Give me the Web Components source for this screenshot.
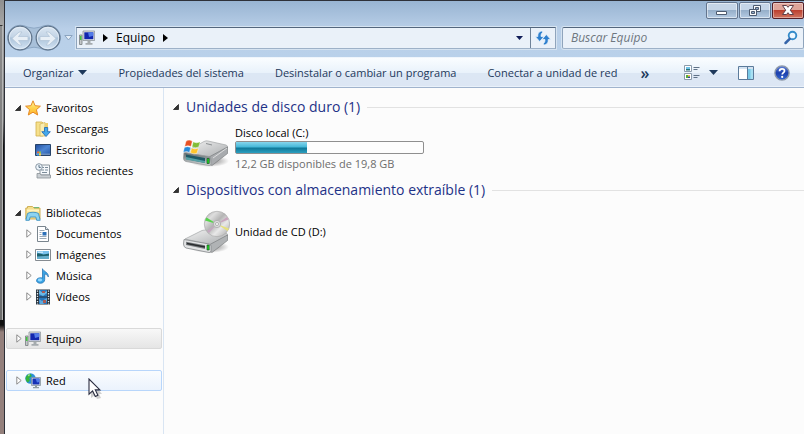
<!DOCTYPE html>
<html lang="es">
<head>
<meta charset="utf-8">
<title>Equipo</title>
<style>
  html, body { height: 100%; margin: 0; }
  body { font: 11px/16px "Open Sans", "Noto Sans", sans-serif; color: #000; overflow: hidden; }
</style>
</head>
<body>
<explorer-window>
  <window-caption slot="caption"></window-caption>
  <address-row slot="address"></address-row>
  <command-bar slot="commands">
    <command-button menu>Organizar</command-button>
    <command-button>Propiedades del sistema</command-button>
    <command-button>Desinstalar o cambiar un programa</command-button>
    <command-button>Conectar a unidad de red</command-button>
  </command-bar>
  <tree-group slot="tree">
    <tree-item icon="star" arrow="open">Favoritos</tree-item>
    <tree-item icon="downloads" level="1">Descargas</tree-item>
    <tree-item icon="desktop" level="1">Escritorio</tree-item>
    <tree-item icon="recent" level="1">Sitios recientes</tree-item>
  </tree-group>
  <tree-group slot="tree">
    <tree-item icon="library" arrow="open">Bibliotecas</tree-item>
    <tree-item icon="document" level="1" arrow="closed">Documentos</tree-item>
    <tree-item icon="picture" level="1" arrow="closed">Imágenes</tree-item>
    <tree-item icon="music" level="1" arrow="closed">Música</tree-item>
    <tree-item icon="video" level="1" arrow="closed">Vídeos</tree-item>
  </tree-group>
  <tree-group slot="tree"><tree-item icon="computer" arrow="closed" state="selected">Equipo</tree-item></tree-group>
  <tree-group slot="tree"><tree-item icon="network" arrow="closed" state="hover">Red</tree-item></tree-group>
  <drive-section heading="Unidades de disco duro (1)">
    <drive-item icon="hdd" name="Disco local (C:)" used="38" info="12,2 GB disponibles de 19,8 GB"></drive-item>
  </drive-section>
  <drive-section heading="Dispositivos con almacenamiento extraíble (1)">
    <drive-item icon="cd" name="Unidad de CD (D:)"></drive-item>
  </drive-section>
</explorer-window>

<script>
const ICONS = {
  star: ['0 0 16 16', `<defs><linearGradient id="g" x2="0" y2="1"><stop stop-color="#fff3a0"/><stop offset=".5" stop-color="#ffd34e"/><stop offset="1" stop-color="#ffb02a"/></linearGradient></defs><path d="M8 .8 10.1 5.7 15.4 6.2 11.4 9.7 12.7 15 8 12.2 3.3 15 4.6 9.7.6 6.2 5.9 5.7Z" fill="url(#g)" stroke="#e58a26" stroke-linejoin="round"/>`],
  downloads: ['0 0 16 16', `<path d="M1 1h6l1 1v13H1Z" fill="#f6e08b" stroke="#d2b04c" stroke-width=".8"/><path d="M5 3l5-1.5V15H5Z" fill="#f9edb2" stroke="#d6b95f" stroke-width=".8"/><path d="M10 2h3v9h-3z" fill="#edcf70"/><path d="M9.5 6.5h3.2v4.2h2.6L11 15.6 6.8 10.7h2.7Z" fill="#43a8ec" stroke="#1a66b4" stroke-width=".8"/>`],
  desktop: ['0 0 16 16', `<defs><linearGradient id="g" x2="1" y2="1"><stop stop-color="#204b9c"/><stop offset=".5" stop-color="#4d86d3"/><stop offset="1" stop-color="#2555a6"/></linearGradient></defs><path d="M.5 2.5h15v11H.5z" fill="url(#g)" stroke="#274369"/><path d="M1 11.5h14V13H1z" fill="#6d90c0"/><path d="M2 9.500h2v2H2z" fill="#ee6a37"/><path d="M4 9.500h2v2H4z" fill="#91c84a"/><path d="M2 11.500h2v2H2z" fill="#49a6e8"/><path d="M4 11.500h2v2H4z" fill="#ffd34e"/>`],
  recent: ['0 0 16 16', `<path d="M5 2h9.5v10H5Z" fill="#f5f8fb" stroke="#8d979f"/><path d="M7 4.5h2m1 0h3M6 7h3m1 0h3M7 9.5h5" stroke="#7b8c9a"/><path d="M2 10.5h3l1 1.5h9.5v3H2Z" fill="#c9ced2" stroke="#8c9297" stroke-width=".8"/><circle cx="4" cy="4" r="3.3" fill="#edf5fb" stroke="#8a98a4"/><path d="M4 2v2.4h1.8" fill="none" stroke="#4d6478" stroke-width=".9"/>`],
  library: ['0 0 16 16', `<path d="M.8 3h1.700V1.500h5L9 3h6v11H.8Z" fill="#f7e08d" stroke="#cba94b" stroke-width=".9"/><path d="M9 2h5v1.2H9z" fill="#74b77a"/><path d="M2 4.5h12v2H2z" fill="#fff3bd"/><path d="M2.500 8.500c2-1.700 9-1.700 11 0l1.700 6.800h-3.500l-.9-3.300H5.200l-.9 3.300H.8Z" fill="#8bd3f1" stroke="#3c91c2" stroke-width=".9"/>`],
  document: ['0 0 16 16', `<path d="M2.5.5h8l3 3v12h-11Z" fill="#fff" stroke="#7a858e"/><path d="M10.5.5v3h3" fill="#dfe6eb" stroke="#7a858e"/><path d="M4.500 4.500h5M4.500 6.500h2M4.500 8.500h2M4.500 10.500h7M4.500 12.500h7" stroke="#9aa9b7"/><path d="M7.500 6h4v3.500h-4z" fill="#2c70b8"/>`],
  picture: ['0 0 16 16', `<path d="M.5 2.500h15v11H.5z" fill="#fff" stroke="#858b91"/><path d="M2 4h12v8H2z" fill="#79c2ed"/><path d="M2 6.500c3-1 5 1.500 8 .8l4-.8V10H2Z" fill="#1c6270"/><path d="M2 9.500 14 8.700V12H2Z" fill="#66aecb"/><path d="M3 5.200h5" stroke="#e5f5ff"/>`],
  music: ['0 0 16 16', `<path d="M7.500.7C8.500 3.700 14 4.300 13.300 9c-.8-2-2.200-2.800-3.600-2.900v5.500c0 2.200-1.900 3.700-4.300 3.700-2.100 0-3.900-1.100-3.900-2.800 0-2 2.900-3.400 6-2.400V.7Z" fill="#3aa3e4" stroke="#1c6cae" stroke-width=".7"/><ellipse cx="5" cy="12" rx="2.200" ry="1.400" fill="#92d8ff"/>`],
  video: ['0 0 16 16', `<path d="M1 .5h14v15H1z" fill="#25313c"/><path d="M4 1h8v6.500H4zM4 8.500h8V15H4z" fill="#2877bd"/><path d="M4 1l4 3 4-2v2L8 7 4 5Z" fill="#6bb8e4"/><path d="M4 10l3 2 5-3v3l-4 3H5Z" fill="#5ba9de"/><path d="M7 2h3v2H7zM8 11h3v3H8z" fill="#a95b55"/><path d="M2.500 1.500v14M13.500 1.500v14" stroke="#e7edf0" stroke-width="1.300" stroke-dasharray="1.300 1.300"/>`],
  computer: ['0 0 16 16', `<path d="M.5 5h2.500v9.500H.5Z" fill="#c3c7c9" stroke="#777d80" stroke-width=".8"/><path d="M1 6h1.500v4H1z" fill="#43c73f"/><path d="M4 1h11.600v9.500H4z" fill="#dfe2e3" stroke="#8e969b" stroke-width=".8"/><path d="M5.300 2.300h9v6.900h-9z" fill="#1327ae"/><path d="M9 2.300h5.300v3.500L10 7Z" fill="#527be8"/><path d="M8.500 11h3v2h2v1.700h-7V13h2Z" fill="#a5abae"/>`],
  network: ['0 0 16 16', `<circle cx="5.500" cy="5.500" r="5.200" fill="#2b8fda"/><path d="M3 1.500c3-1.500 4 .5 3.500 2L4 5l1 2-2 2.500C1 8.500.3 6 .8 4Z" fill="#35b43b"/><path d="M2.500 1.800 5 1.200 4 3.500Z" fill="#c0f09b"/><path d="M6.500 4.500h9v8h-9z" fill="#e0e4e7" stroke="#788894" stroke-width=".7"/><path d="M7.500 5.500h7v6h-7z" fill="#1632b7"/><path d="M10.500 5.500h4V9L12 9.500Z" fill="#527be8"/><path d="M10 12.500h2v1.500h2v1.300H8V14h2Z" fill="#8f9ba3"/>`],
  refresh: ['0 0 16 16', `<path d="M7 1C3.500 1.500 2.600 4 2.900 6.500H.3L4.700 11.500 9 6.500H6C5.900 4.500 6.500 3.200 8 2ZM9 15c3.500-.5 4.400-3 4.100-5.500h2.600L11.300 4.500 7 9.500h3c.1 2-.5 3.300-2 4.500Z" fill="#2f80ce" stroke="#edf5fc" stroke-width=".7"/>`],
  search: ['0 0 16 16', `<circle cx="9.500" cy="5.500" r="3.800" fill="#eff8ff" stroke="#348bca" stroke-width="1.900"/><path d="M6.700 8.800 2.500 13" stroke="#3564a9" stroke-width="2.500" stroke-linecap="round"/>`],
  views: ['0 0 16 16', `<path d="M.5.5h7v6h-7zM.5 8.500h7v6h-7z" fill="#fff" stroke="#8b9bab"/><path d="M2 2h4v2H2z" fill="#70c4e9"/><path d="M2 4h4v1.500H2z" fill="#28737a"/><path d="M2 10h2v3H2z" fill="#57ac38"/><path d="M4 10h2v1.500H4z" fill="#f3c334"/><path d="M4 11.500h2V13H4z" fill="#304496"/><path d="M9.500 2.500h6M9.500 4.500h4M9.500 10.500h6M9.500 12.500h4" stroke="#5f7287"/>`],
  pane: ['0 0 16 14', `<path d="M.5.5h15v13H.5z" fill="#fff" stroke="#5b7b9b"/><path d="M1 1h14v2H1z" fill="#d4e3f1"/><path d="M10 3h5v10h-5z" fill="#79c9e7"/><path d="M12.500 3H15v10h-2.500z" fill="#a7e0f3"/><path d="M9.500 1v12" stroke="#5b7b9b"/>`],
  help: ['0 0 16 16', `<defs><linearGradient id="g" x2="0" y2="1"><stop stop-color="#6184dc"/><stop offset=".5" stop-color="#1c3fac"/><stop offset="1" stop-color="#3569d2"/></linearGradient></defs><circle cx="8" cy="8" r="7.100" fill="url(#g)" stroke="#8d98a8" stroke-width="1.400"/><path d="M5.500 6.200C5.600 4.600 6.600 3.900 8 3.900s2.500.8 2.500 2C10.500 7.600 8.200 7.700 8.200 9.600" fill="none" stroke="#fff" stroke-width="1.700"/><circle cx="8.200" cy="11.900" r="1.100" fill="#fff"/>`],
  hdd: ['0 0 48 36', `<defs><linearGradient id="g" x2="1" y2="1"><stop stop-color="#f4f4f4"/><stop offset="1" stop-color="#a8abad"/></linearGradient><linearGradient id="f" x2="0" y2="1"><stop stop-color="#5a6467"/><stop offset="1" stop-color="#d5dadb"/></linearGradient><radialGradient id="s"><stop stop-color="#777"/><stop offset="1" stop-color="#777" stop-opacity="0"/></radialGradient></defs><ellipse cx="27" cy="30" rx="20" ry="6" fill="url(#s)"/><path d="M3 21 22 10.500Q24 9.500 26 10L44 14q2 .7 1.500 2.500L30 27Z" fill="url(#g)" stroke="#a2a5a6" stroke-width=".7"/><path d="M45.500 16v6.500L30 34.500 27 33v-7Z" fill="#a8abae" stroke="#707375" stroke-width=".6"/><path d="M2 21.500 27 25.500q2 .5 2 2.500v4.500q0 2.500-2 2L4 30.500Q1.500 30 1.500 27Z" fill="url(#f)" stroke="#989b9d" stroke-width=".8"/><path d="M4 23.500 23 27v5L4 28Z" fill="#1f5966"/><path d="M4 26 23 30v2L4 28.500Z" fill="#57a1a5"/><path d="M25 27.500h2.200v5H25z" fill="#22db26" stroke="#113f18" stroke-width=".6"/><path d="M31 27 45 17" stroke="#e8e8e8" stroke-width=".8"/><path d="M24 12.500 30 14" stroke="#8b8f91"/><g stroke="#fff" stroke-width=".4"><path d="M4 10.200q3-2.200 6.300 0L9 15.500q-3-1.700-6.300 0Z" fill="#e75124"/><path d="M11.200 10.800q3 2 7 0L16.700 16q-3 1.700-6.700-.3Z" fill="#82bd37"/><path d="M2.400 16.500q3-1.700 6.300 0L7.400 21.500q-3-2-6.200 0Z" fill="#278bd9"/><path d="M9.700 17q3 1.900 6.700.1L15 22.200q-3 1.500-6.600-.5Z" fill="#ffc52b"/></g>`],
  cd: ['0 0 48 44', `<defs><linearGradient id="d" x2="1" y2="1"><stop stop-color="#a9a9a9"/><stop offset=".25" stop-color="#dedede"/><stop offset=".45" stop-color="#b4b4b4"/><stop offset=".65" stop-color="#e9e9e9"/><stop offset="1" stop-color="#a2a2a2"/></linearGradient><linearGradient id="g" x2="1" y2="1"><stop stop-color="#f4f4f4"/><stop offset="1" stop-color="#a8abad"/></linearGradient><radialGradient id="s"><stop stop-color="#777"/><stop offset="1" stop-color="#777" stop-opacity="0"/></radialGradient></defs><ellipse cx="27" cy="37" rx="20" ry="6" fill="url(#s)"/><path d="M3 29 20 20.500Q22 20 24 20L44 23q2 .7 1.500 2.500L30 35Z" fill="url(#g)" stroke="#a2a5a6" stroke-width=".7"/><path d="M45.500 25v5.500L30 42.500 27 41v-6Z" fill="#b0b3b5" stroke="#707375" stroke-width=".6"/><path d="M2 29.500 27 34q2 .5 2 2v4.500q0 2.500-2 2L4 38Q1.500 37 1.500 34Z" fill="#e2e3e4" stroke="#84888a" stroke-width=".8"/><path d="M4 31.800 23 35.300v3.700L4 35Z" fill="#7a7e81"/><path d="M5 33.500 23 37" stroke="#292c2e" stroke-width="1.300"/><path d="M25 35h2.200v5H25z" fill="#22db26" stroke="#113f18" stroke-width=".6"/><circle cx="35" cy="14" r="12.700" fill="url(#d)" stroke="#aaa" stroke-width=".7"/><path d="M35 14 23 10.500 24.500 7.500Z" fill="#57d34b"/><path d="M35 14 46.500 9.500 45 7Z" fill="#c9a5bd"/><path d="M35 14 47 18.500 45.500 21Z" fill="#e6e07d"/><path d="M35 14 25 21 27 23Z" fill="#c3a8bf"/><circle cx="35" cy="14" r="3.600" fill="#ddd" stroke="#aaa" stroke-width=".8"/><circle cx="35" cy="14" r="1.500" fill="#fff" stroke="#888" stroke-width=".6"/>`],
  cursor: ['0 0 14 22', `<path d="M3 3v17l4-3 2 4 4-1-2-4h3Z" fill="#777" opacity=".35"/><path d="M1 1v15.200l3.600-3.300 2.700 5.600 2.600-1.200-2.600-5.400h4.600Z" fill="#fff" stroke="#2a2d40" stroke-width="1.100"/>`],
  minimize: ['0 0 32 17', `<path d="M10.500 9.500h10v3h-10z" fill="#fff" stroke="#4d5b70"/>`],
  restore: ['0 0 32 17', `<path d="M14.500 3.500h7v6h-7z" fill="#f8f8f8" stroke="#4d5b70"/><path d="M16.500 5.500h3v2h-3z" fill="#90a9c6" stroke="#4d5b70"/><path d="M10.500 7.500h7v6h-7z" fill="#f8f8f8" stroke="#4d5b70"/><path d="M12.500 9.500h3v2h-3z" fill="#90a9c6" stroke="#4d5b70"/>`],
  close: ['0 0 32 17', `<path d="M10.500 3.500h4L16 5.300l1.500-1.800h4L18.300 8.200l3.200 4.300h-4L16 10.700l-1.500 1.800h-4l3.200-4.300Z" fill="#fff" stroke="#5f3f48"/>`],
  down: ['0 0 9 5', `<path d="M0 0h9L4.500 5Z" fill="currentColor"/>`],
  downSmall: ['0 0 7 4', `<path d="M0 0h7L3.500 4Z" fill="currentColor"/>`],
  downOutline: ['0 0 9 6', `<path d="M.8.5h7.400L4.500 5Z" fill="#e4edf6" stroke="#8ba4c0"/>`],
  right: ['0 0 5 8', `<path d="M0 0 5 4 0 8Z" fill="#000"/>`],
  open: ['0 0 6 6', `<path d="M5.500.5v5h-5Z" fill="#333" stroke="#222" stroke-width=".8"/>`],
  closed: ['0 0 7 9', `<path d="M1.800.8 6.200 4.500 1.800 8.200Z" fill="#fff" stroke="#8c8c8c"/>`],
  navigation: ['0 0 56 28', `<defs><linearGradient id="g" x2="0" y2="1"><stop stop-color="#dce7f2"/><stop offset=".45" stop-color="#c3d4e6"/><stop offset=".5" stop-color="#adc4da"/><stop offset="1" stop-color="#d4e4f4"/></linearGradient></defs><path d="M15 1.200q4 0 8 2 6 2 12 0 4-2 8-2a12.500 12.500 0 0 1 0 25q-4 0-8-2-6-2-12 0-4 2-8 2a12.500 12.500 0 0 1 0-25Z" fill="#a8c0d9" stroke="#8ca7c4"/><circle cx="15" cy="14" r="11.800" fill="url(#g)" stroke="#61758c" stroke-width="1.300"/><circle cx="43" cy="14" r="11.800" fill="url(#g)" stroke="#61758c" stroke-width="1.300"/><circle cx="15" cy="14" r="10.700" fill="none" stroke="#e6eff8" stroke-width=".8"/><circle cx="43" cy="14" r="10.700" fill="none" stroke="#e6eff8" stroke-width=".8"/><path d="M7 14.500 14 8h3l-3.500 4.500H23v4h-9.500L17 21h-3Z" fill="#e8eff6" stroke="#b2c5d8" stroke-width=".8"/><path d="M51 14.500 44 8h-3l3.500 4.500H35v4h9.500L41 21h3Z" fill="#e8eff6" stroke="#b2c5d8" stroke-width=".8"/>`]
};

const BUTTON_RESET = `button { font: inherit; color: inherit; background: none; border: 0; padding: 0; margin: 0; display: flex; align-items: center; }`;

function define(name, render) {
  customElements.define(name, class extends HTMLElement {
    constructor() { super(); this.attachShadow({ mode: 'open' }); }
    connectedCallback() { this.shadowRoot.innerHTML = render(this); }
  });
}

define('ui-icon', el => {
  const [box, body] = ICONS[el.getAttribute('name')];
  const [, , w, h] = box.split(' ');
  return `<style>:host { display: block; flex: none; } svg { display: block; }</style>
    <svg width="${w}" height="${h}" viewBox="${box}" fill="none" aria-hidden="true">${body}</svg>`;
});

define('explorer-window', () => `<style>
  :host { display: grid; grid-template-columns: 4px minmax(0, 1fr); height: 100%; }
  .behind { display: flex; flex-direction: column; background: linear-gradient(#8f8f8f, #a5a5a5 24px, #999 60px, #777 120px, #111 146px, #111 325px, #94807c 332px, #94807c); }
  .behind::before { content: ""; height: 25px; }
  .behind::after { content: ""; height: 294px; border-top: 1px solid #333; border-right: 1px solid #b5b5b5; margin-right: 1px; background: linear-gradient(#8c8c8c, #6c6c6c); }
  .window { border: 1px solid #2d3038; border-width: 1px 0 0 1px; display: flex; flex-direction: column; background: #fcfcfc; min-width: 0; }
  .frame { background: linear-gradient(#98b4d2, #b9cfe8 28px, #b9d1ea); padding-bottom: 6px; }
  .body { flex: 1; display: grid; grid-template-columns: 159px minmax(0, 1fr); min-height: 0; }
  nav { border-right: 1px solid #d9e5f3; padding: 9px 1px 0; display: flex; flex-direction: column; gap: 21px; overflow: hidden; }
  main { padding: 9px 0 0 9px; min-width: 0; }
  .cursor { position: absolute; left: 88px; top: 378px; }
</style>
<div class="behind"></div>
<div class="window">
  <div class="frame"><slot name="caption"></slot><slot name="address"></slot></div>
  <slot name="commands"></slot>
  <div class="body"><nav><slot name="tree"></slot></nav><main><slot></slot></main></div>
</div>
<ui-icon class="cursor" name="cursor"></ui-icon>`);

define('window-caption', () => `<style>
  ${BUTTON_RESET}
  :host { display: flex; justify-content: flex-end; gap: 1px; height: 24px; padding-top: 1px; box-sizing: border-box; }
  button { box-sizing: border-box; width: 32px; height: 17px; justify-content: center; border: 1px solid #63758e; border-radius: 2px; box-shadow: inset 0 0 0 1px #ffffff80; background: linear-gradient(#c5d5e7 45%, #96afca 50%, #b5cbe3); }
  .close { border-color: #541f27; background: linear-gradient(#dfa499 45%, #bc4130 50%, #d07561); box-shadow: inset 0 0 0 1px #ffffff60; }
</style>
<button aria-label="Minimizar"><ui-icon name="minimize"></ui-icon></button>
<button aria-label="Restaurar"><ui-icon name="restore"></ui-icon></button>
<button class="close" aria-label="Cerrar"><ui-icon name="close"></ui-icon></button>`);

define('address-row', () => `<style>
  ${BUTTON_RESET}
  :host { display: flex; align-items: center; height: 26px; font-size: 12px; }
  .history { position: relative; margin-right: 3px; }
  .history div { position: absolute; inset: 0; display: grid; grid-template-columns: 1fr 1fr; }
  .path, .search { display: flex; align-items: center; height: 22px; box-sizing: border-box; background: #eaf1f9; border: 1px solid; border-color: #53667d #8fa4bc #9db1c8; box-shadow: 0 0 0 1px #d5e3f1; }
  .path { flex: 478 0 0; margin-left: 3px; }
  .search { flex: 236 0 0; margin-left: 6px; padding-right: 4px; border-radius: 2px; }
  .crumbs { flex: 1; display: flex; align-items: center; padding-left: 2px; gap: 8px; }
  .drop { padding: 0 7px; color: #101c58; }
  .refresh { width: 25px; height: 20px; justify-content: center; border-left: 1px solid #6f8298; }
  input { flex: 1; min-width: 0; border: 0; background: none; outline: 0; font: inherit; font-style: italic; padding: 0 0 0 8px; }
  input::placeholder { color: #6f7780; opacity: 1; }
</style>
<div class="history"><ui-icon name="navigation"></ui-icon><div><button aria-label="Atrás"></button><button aria-label="Adelante"></button></div></div>
<button aria-label="Páginas recientes"><ui-icon name="downOutline"></ui-icon></button>
<div class="path">
  <div class="crumbs"><ui-icon name="computer"></ui-icon><ui-icon name="right"></ui-icon><button>Equipo</button><ui-icon name="right"></ui-icon></div>
  <button class="drop" aria-label="Ubicaciones anteriores"><ui-icon name="downSmall"></ui-icon></button>
  <button class="refresh" aria-label="Actualizar"><ui-icon name="refresh"></ui-icon></button>
</div>
<div class="search"><input type="search" aria-label="Buscar" placeholder="Buscar Equipo"><button aria-label="Buscar ahora"><ui-icon name="search"></ui-icon></button></div>`);

define('command-bar', () => `<style>
  ${BUTTON_RESET}
  :host { display: flex; align-items: center; height: 31px; box-sizing: border-box; flex: none; padding: 0 14px 0 18px; gap: 31px; color: #1e395b; background: linear-gradient(#fafdff, #e9f2fb 50%, #dce7f4 52%, #dce6f4); border-top: 1px solid #eef5fc; border-bottom: 1px solid #a0b3cd; box-shadow: inset 0 -1px #e9f1fa; }
  .more { font-size: 16px; font-weight: 600; margin-left: -8px; }
  .tools { margin-left: auto; display: flex; align-items: center; gap: 20px; }
  .views { gap: 9px; }
</style>
<slot></slot>
<button class="more" aria-label="Más comandos">»</button>
<div class="tools">
  <button class="views" aria-label="Cambiar la vista"><ui-icon name="views"></ui-icon><ui-icon name="down"></ui-icon></button>
  <button aria-label="Panel de vista previa"><ui-icon name="pane"></ui-icon></button>
  <button aria-label="Ayuda"><ui-icon name="help"></ui-icon></button>
</div>`);

define('command-button', el => `<style>
  ${BUTTON_RESET}
  :host { display: block; } button { gap: 5px; white-space: nowrap; }
</style><button><slot></slot>${el.hasAttribute('menu') ? '<ui-icon name="down"></ui-icon>' : ''}</button>`);

define('tree-group', () => `<style>:host { display: block; }</style><slot></slot>`);

define('tree-item', el => `<style>
  ${BUTTON_RESET}
  :host { display: block; }
  button { box-sizing: border-box; width: 100%; height: 21px; border: 1px solid transparent; border-radius: 2px; padding-left: 8px; }
  :host([level]) button { padding-left: 18px; }
  .arrow { width: 10px; flex: none; }
  .label { padding-left: 5px; white-space: nowrap; }
  :host([state=selected]) button { background: linear-gradient(#f8f8f8, #e5e5e5); border-color: #d9d9d9; }
  :host([state=hover]) button { background: linear-gradient(#fafcfe, #ebf3fd); border-color: #b8d6fb; }
</style><button><span class="arrow">${el.hasAttribute('arrow') ? `<ui-icon name="${el.getAttribute('arrow')}"></ui-icon>` : ''}</span><ui-icon name="${el.getAttribute('icon')}"></ui-icon><span class="label"><slot></slot></span></button>`);

define('drive-section', el => `<style>
  :host { display: block; }
  h2 { margin: 0; display: flex; align-items: center; font-size: 14px; line-height: 20px; font-weight: 400; color: #1e3287; white-space: nowrap; gap: 7px; }
  h2::after { content: ""; flex: 1; height: 1px; background: #e2e2e2; }
  .items { height: 63px; display: flex; align-items: center; }
</style><h2><ui-icon name="open"></ui-icon>${el.getAttribute('heading')}</h2><div class="items"><slot></slot></div>`);

define('drive-item', el => {
  const used = el.getAttribute('used');
  return `<style>
  :host { display: flex; align-items: center; gap: 5px; padding-left: 9px; }
  .bar { box-sizing: border-box; width: 189px; height: 13px; border: 1px solid #8f8f8f; border-radius: 2px; background: #fdfdfd; }
  .fill { height: 100%; background: linear-gradient(#86d5ec, #45b8d8 45%, #0f7898 55%, #2b9fc0); }
  .info { color: #6d6d6d; margin-top: 2px; }
</style><ui-icon name="${el.getAttribute('icon')}"></ui-icon>
<div><div>${el.getAttribute('name')}</div>${used ? `<div class="bar" role="progressbar" aria-label="Espacio usado" aria-valuenow="${used}"><div class="fill" style="width:${used}%"></div></div><div class="info">${el.getAttribute('info')}</div>` : ''}</div>`;
});
</script>
</body>
</html>
